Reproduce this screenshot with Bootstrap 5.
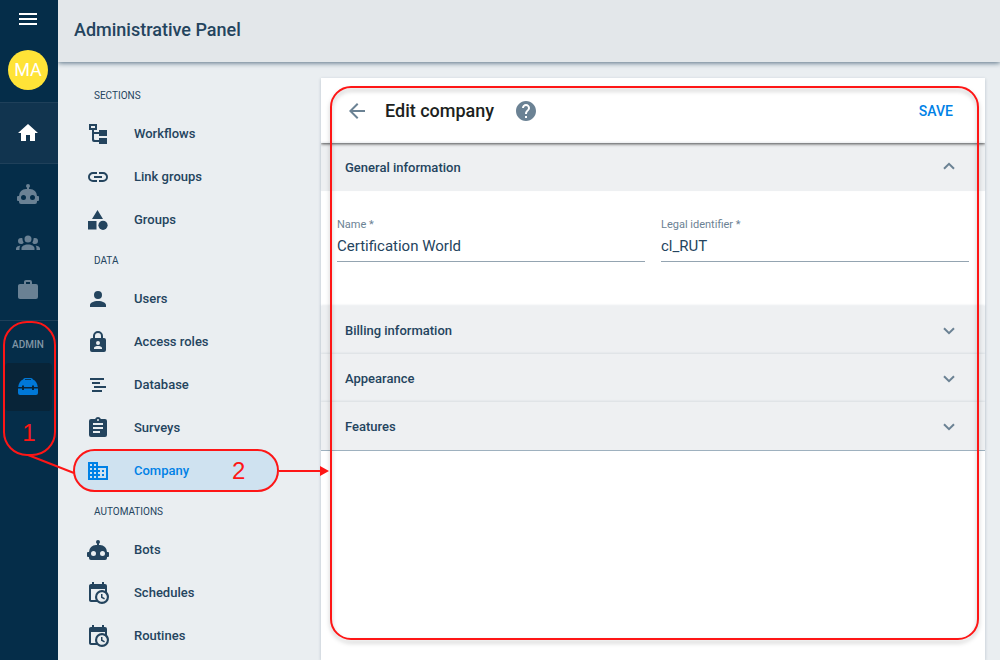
<!DOCTYPE html>
<html lang="en">
<head>
<meta charset="utf-8">
<meta name="viewport" content="width=device-width, initial-scale=1">
<title>Administrative Panel</title>
<link href="https://cdn.jsdelivr.net/npm/bootstrap@5.3.0/dist/css/bootstrap.min.css" rel="stylesheet">
<style>
  :root { --navy:#052d49; --ink:#24445e; --slate:#6b8294; --blue:#0081e6; --red:#fe1616; }
  body { font-family: Roboto, "Liberation Sans", sans-serif; font-size: 13px; line-height: 20px; color: var(--ink); background: #eaeef1; }
  svg { display: block; fill: currentColor; flex-shrink: 0; }
  a { color: inherit; text-decoration: none; }
  button { font-family: inherit; }

  /* icon rail */
  .rail { width: 58px; padding-right: 2px; background: var(--navy); flex-shrink: 0; }
  .rail-btn { display: flex; align-items: center; justify-content: center; width: 100%; height: 48px; border: 0; background: none; color: #6a8194; }
  .rail-menu { height: 38px; color: #fff; }
  .avatar { width: 40px; height: 40px; margin: 12px auto; background: #ffe337; color: #fff; font-size: 18px; }
  .rail-home { height: 62px; width: 58px; margin-bottom: 6px; padding-right: 2px; color: #fff; background: #11344f; border: solid #1f405a; border-width: 1px 0; }
  .rail-admin { width: 58px; margin-top: 6px; border-top: 1px solid #1f405a; height: 136px; }
  .rail-label { height: 42px; padding: 14px 2px 0 0; font-size: 10px; font-weight: 500; color: #8196a6; }
  .rail-active { width: 47px; margin-left: 5px; padding-right: 1px; color: #0078d7; background: #082438; border-radius: 4px; }

  /* numbered highlights */
  .callout-ring { position: absolute; border: 2px solid var(--red); pointer-events: none; }
  .ring-admin { inset: 0 2px 0 3px; border-radius: 24px; }
  .ring-company { inset: 0; border-radius: 22px; }
  .ring-panel { inset: 8px 6px 20px 9px; border-radius: 21px; filter: drop-shadow(0 3px 2px rgba(0,0,0,.25)); z-index: 3; }
  .callout-num { font-family: "Liberation Sans", sans-serif; font-size: 24px; line-height: 44px; color: var(--red); font-weight: 400; }
  .link-line { position: absolute; left: 28px; top: 134px; overflow: visible; z-index: 4; }
  .link-arrow { position: absolute; left: 100%; top: 17px; z-index: 4; }

  .topbar { height: 62px; padding: 0 16px; background: #e3e7ea; box-shadow: 0 1px 5px rgba(36,68,94,.75); z-index: 2; clip-path: inset(0 0 -8px 0); }
  .topbar h1 { font-size: 18px; line-height: 24px; font-weight: 500; padding-bottom: 3px; }

  .side { width: 263px; padding: 14px 42px 0 15px; flex-shrink: 0; }
  .side h2 { height: 36px; margin: 0; padding: 10px 0 0 21px; font-size: 10px; line-height: 20px; font-weight: 400; }
  .side-item { position: relative; display: flex; align-items: center; height: 43px; padding-left: 13px; font-weight: 500; }
  .side-item span:first-of-type { margin-left: 24px; }
  .side-item.active { color: var(--blue); background: #cfe2f0; border-radius: 22px; }
  .side-item .callout-num { margin-left: 43px; }

  .panel { position: relative; margin: 16px 15px 0 0; background: #fff; box-shadow: 0 1px 3px rgba(36,68,94,.25); min-width: 0; }
  .panel-head { position: relative; height: 65px; padding: 0 32px 0 24px; box-shadow: 0 1px 3px rgba(0,0,0,.7); clip-path: inset(0 0 -6px 0); z-index: 1; }
  .panel-head h2 { margin: 0 20px 0 16px; font-size: 18px; line-height: 24px; font-weight: 500; color: #1c1f21; }
  .icon-btn { padding: 0; border: 0; background: none; color: var(--slate); }
  .save { padding: 0; border: 0; background: none; color: var(--blue); font-size: 14px; font-weight: 500; }
  .fold { display: flex; align-items: center; justify-content: space-between; width: 100%; height: 48px; padding: 2px 30px 0 24px; border: 0; background: #eef0f2; color: var(--ink); font-weight: 500; box-shadow: 0 -1px 2px rgba(36,68,94,.1); }
  .fold svg { color: var(--slate); }
  .fold[aria-expanded="true"] svg { margin-bottom: 4px; }
  .folds { border-bottom: 1px solid #9fb2c0; }
  .fields { height: 115px; padding: 26px 16px 0; gap: 16px; }
  .fields label { display: block; height: 16px; font-size: 11px; line-height: 16px; color: var(--slate); }
  .fields input { display: block; width: 100%; height: 29px; padding: 0 0 3px; border: 0; border-bottom: 1px solid #94a4b1; border-radius: 0; background: none; color: var(--ink); font-size: 15px; }
</style>
</head>
<body>
<svg class="d-none" aria-hidden="true">
  <symbol id="robot" viewBox="0 0 24 24"><path d="M12,2A2,2 0 0,1 14,4C14,4.74 13.6,5.39 13,5.73V7H14A7,7 0 0,1 21,14H22A1,1 0 0,1 23,15V18A1,1 0 0,1 22,19H21V20A2,2 0 0,1 19,22H5A2,2 0 0,1 3,20V19H2A1,1 0 0,1 1,18V15A1,1 0 0,1 2,14H3A7,7 0 0,1 10,7H11V5.73C10.4,5.39 10,4.74 10,4A2,2 0 0,1 12,2M7.5,13A2.5,2.5 0 0,0 5,15.5A2.5,2.5 0 0,0 7.5,18A2.5,2.5 0 0,0 10,15.5A2.5,2.5 0 0,0 7.5,13M16.5,13A2.5,2.5 0 0,0 14,15.5A2.5,2.5 0 0,0 16.5,18A2.5,2.5 0 0,0 19,15.5A2.5,2.5 0 0,0 16.5,13Z"/></symbol>
  <symbol id="calclock" viewBox="0 0 24 24"><path d="M15,13H16.5V15.82L18.94,17.23L18.19,18.53L15,16.69V13M19,8H5V19H9.67C9.24,18.09 9,17.07 9,16A7,7 0 0,1 16,9C17.07,9 18.09,9.24 19,9.67V8M5,21C3.89,21 3,20.1 3,19V5C3,3.89 3.89,3 5,3H6V1H8V3H16V1H18V3H19A2,2 0 0,1 21,5V11.1C22.24,12.36 23,14.09 23,16A7,7 0 0,1 16,23C14.09,23 12.36,22.24 11.1,21H5M16,11.15A4.85,4.85 0 0,0 11.15,16C11.15,18.68 13.32,20.85 16,20.85A4.85,4.85 0 0,0 20.85,16C20.85,13.32 18.68,11.15 16,11.15Z"/></symbol>
  <symbol id="down" viewBox="0 0 12 8"><path d="M1 1.2l5 5 5-5" fill="none" stroke="currentColor" stroke-width="2"/></symbol>
</svg>

<div class="d-flex min-vh-100">
  <nav class="rail" aria-label="Main">
    <button class="rail-btn rail-menu" type="button" aria-label="Menu"><svg width="24" height="24" viewBox="0 0 24 24"><path d="M3,6H21V8H3V6M3,11H21V13H3V11M3,16H21V18H3V16Z"/></svg></button>
    <div class="avatar rounded-circle d-flex align-items-center justify-content-center">MA</div>
    <a class="rail-btn rail-home" href="#" aria-label="Home"><svg width="24" height="24" viewBox="0 0 24 24"><path d="M10,20V14H14V20H19V12H22L12,3L2,12H5V20H10Z"/></svg></a>
    <a class="rail-btn" href="#" aria-label="Bots"><svg width="24" height="24"><use href="#robot"/></svg></a>
    <a class="rail-btn" href="#" aria-label="People"><svg width="24" height="24" viewBox="0 0 24 24"><path d="M12,5.5A3.5,3.5 0 0,1 15.5,9A3.5,3.5 0 0,1 12,12.5A3.5,3.5 0 0,1 8.5,9A3.5,3.5 0 0,1 12,5.5M5,8C5.56,8 6.08,8.15 6.53,8.42C6.38,9.85 6.8,11.27 7.66,12.38C7.16,13.34 6.16,14 5,14A3,3 0 0,1 2,11A3,3 0 0,1 5,8M19,8A3,3 0 0,1 22,11A3,3 0 0,1 19,14C17.84,14 16.84,13.34 16.34,12.38C17.2,11.27 17.62,9.85 17.47,8.42C17.92,8.15 18.44,8 19,8M5.5,18.25C5.5,16.18 8.41,14.5 12,14.5C15.59,14.5 18.5,16.18 18.5,18.25V20H5.5V18.25M0,20V18.5C0,17.11 1.89,15.94 4.45,15.6C3.86,16.28 3.5,17.22 3.5,18.25V20H0M24,20H20.5V18.25C20.5,17.22 20.14,16.28 19.55,15.6C22.11,15.94 24,17.11 24,18.5V20Z"/></svg></a>
    <a class="rail-btn" href="#" aria-label="Work"><svg width="24" height="24" viewBox="0 0 24 24"><path d="M10,2H14A2,2 0 0,1 16,4V6H20A2,2 0 0,1 22,8V19A2,2 0 0,1 20,21H4C2.89,21 2,20.1 2,19V8C2,6.89 2.89,6 4,6H8V4C8,2.89 8.89,2 10,2M14,6V4H10V6H14Z"/></svg></a>
    <div class="rail-admin position-relative text-center">
      <div class="rail-label">ADMIN</div>
      <a class="rail-btn rail-active" href="#" aria-label="Admin tools"><svg width="24" height="24" viewBox="0 0 24 24"><path fill-rule="evenodd" d="M7 4.500Q7.500 3 9 3H15Q16.500 3 17 4.500C19.500 5.500 21.500 8.500 21.800 12H18V10.500H16V12H8V10.500H6V12H2.200C2.500 8.500 4.500 5.500 7 4.500ZM9 5H15V4.200H9ZM2 13.500H6V15H8V13.500H16V15H18V13.500H22V18Q22 20 20 20H4Q2 20 2 18Z"/></svg></a>
      <div class="callout-num">1</div>
      <div class="callout-ring ring-admin"></div>
      <svg class="link-line" width="46" height="18"><path d="M0 0L46 18" stroke="#fe1616" stroke-width="2"/></svg>
    </div>
  </nav>

  <div class="flex-grow-1 d-flex flex-column" style="min-width:0">
    <header class="topbar d-flex align-items-center"><h1 class="m-0">Administrative Panel</h1></header>
    <div class="d-flex flex-grow-1">
      <nav class="side" aria-label="Sections">
        <h2>SECTIONS</h2>
        <a class="side-item" href="#"><svg width="24" height="24" viewBox="0 0 24 24"><path fill-rule="evenodd" d="M3 2H11V8H8V10H13V8H21V14H13V12H8V17Q8 18 9 18H13V16H21V22H13V20H8Q6 20 6 18V8H3ZM5 4V6H9V4Z"/></svg><span>Workflows</span></a>
        <a class="side-item" href="#"><svg width="24" height="24" viewBox="0 0 24 24"><path d="M3.900,12C3.900,10.290 5.290,8.900 7,8.900H11V7H7A5,5 0 0,0 2,12A5,5 0 0,0 7,17H11V15.100H7C5.290,15.100 3.900,13.710 3.900,12M8,13H16V11H8V13M17,7H13V8.900H17C18.710,8.900 20.100,10.290 20.100,12C20.100,13.710 18.710,15.100 17,15.100H13V17H17A5,5 0 0,0 22,12A5,5 0 0,0 17,7Z"/></svg><span>Link groups</span></a>
        <a class="side-item" href="#"><svg width="24" height="24" viewBox="0 0 24 24"><path d="M11.500 2L17 11H6ZM2 13H10.500V21.500H2Z"/><circle cx="17" cy="17.300" r="4.600"/></svg><span>Groups</span></a>
        <h2>DATA</h2>
        <a class="side-item" href="#"><svg width="24" height="24" viewBox="0 0 24 24"><path d="M12,4A4,4 0 0,1 16,8A4,4 0 0,1 12,12A4,4 0 0,1 8,8A4,4 0 0,1 12,4M12,14C16.420,14 20,15.790 20,18V20H4V18C4,15.790 7.580,14 12,14Z"/></svg><span>Users</span></a>
        <a class="side-item" href="#"><svg width="24" height="24" viewBox="0 0 24 24"><path fill-rule="evenodd" d="M6 8H7V6A5 5 0 0 1 17 6V8H18A2 2 0 0 1 20 10V20A2 2 0 0 1 18 22H6A2 2 0 0 1 4 20V10A2 2 0 0 1 6 8ZM9 8H15V6A3 3 0 0 0 9 6ZM12 11A2 2 0 1 0 12 15A2 2 0 1 0 12 11ZM8 19H16V18C16 16.600 13.500 16 12 16S8 16.600 8 18Z"/></svg><span>Access roles</span></a>
        <a class="side-item" href="#"><svg width="24" height="24" viewBox="0 0 24 24"><path d="M4 5H18V7H4ZM6 9H14V11H6ZM8 13H20V15H8ZM6 17H16V19H6Z"/></svg><span>Database</span></a>
        <a class="side-item" href="#"><svg width="24" height="24" viewBox="0 0 24 24"><path d="M17,9H7V7H17M17,13H7V11H17M14,17H7V15H14M12,3A1,1 0 0,1 13,4A1,1 0 0,1 12,5A1,1 0 0,1 11,4A1,1 0 0,1 12,3M19,3H14.820C14.400,1.840 13.300,1 12,1C10.700,1 9.600,1.840 9.180,3H5A2,2 0 0,0 3,5V19A2,2 0 0,0 5,21H19A2,2 0 0,0 21,19V5A2,2 0 0,0 19,3Z"/></svg><span>Surveys</span></a>
        <a class="side-item active" href="#"><svg width="24" height="24" viewBox="0 0 24 24"><path d="M18,15H16V17H18M18,11H16V13H18M20,19H12V17H14V15H12V13H14V11H12V9H20M10,7H8V5H10M10,11H8V9H10M10,15H8V13H10M10,19H8V17H10M6,7H4V5H6M6,11H4V9H6M6,15H4V13H6M6,19H4V17H6M12,7V3H2V21H22V7H12Z"/></svg><span>Company</span><span class="callout-num">2</span><span class="callout-ring ring-company"></span><svg class="link-arrow" width="50" height="10" viewBox="0 0 50 10"><path fill="#fe1616" d="M0 4H41V0L50 5L41 10V6H0Z"/></svg></a>
        <h2>AUTOMATIONS</h2>
        <a class="side-item" href="#"><svg width="24" height="24"><use href="#robot"/></svg><span>Bots</span></a>
        <a class="side-item" href="#"><svg width="24" height="24"><use href="#calclock"/></svg><span>Schedules</span></a>
        <a class="side-item" href="#"><svg width="24" height="24"><use href="#calclock"/></svg><span>Routines</span></a>
      </nav>

      <main class="panel flex-grow-1">
        <div class="panel-head d-flex align-items-center">
          <button class="icon-btn" type="button" aria-label="Back"><svg width="24" height="24" viewBox="0 0 24 24"><path d="M20 11H7.830l5.590-5.590L12 4l-8 8 8 8 1.410-1.410L7.830 13H20v-2z"/></svg></button>
          <h2>Edit company</h2>
          <button class="icon-btn" type="button" aria-label="Help"><svg width="24" height="24" viewBox="0 0 24 24"><path d="M12 2C6.480 2 2 6.480 2 12s4.480 10 10 10 10-4.480 10-10S17.520 2 12 2zm1 17h-2v-2h2v2zm2.070-7.750l-.9.920C13.450 12.900 13 13.500 13 15h-2v-.5c0-1.100.45-2.100 1.170-2.830l1.240-1.260c.37-.36.59-.86.59-1.410 0-1.100-.9-2-2-2s-2 .9-2 2H8c0-2.210 1.790-4 4-4s4 1.790 4 4c0 .88-.36 1.680-.93 2.250z"/></svg></button>
          <button class="save ms-auto" type="button">SAVE</button>
        </div>
        <div class="folds">
          <button class="fold" type="button" data-bs-toggle="collapse" data-bs-target="#general" aria-expanded="true">General information<svg width="12" height="8" viewBox="0 0 12 8"><path d="M1 6.800l5-5 5 5" fill="none" stroke="currentColor" stroke-width="2"/></svg></button>
          <div class="collapse show" id="general">
            <div class="fields d-flex">
              <div class="flex-fill"><label for="name">Name *</label><input id="name" type="text" value="Certification World"></div>
              <div class="flex-fill"><label for="legal">Legal identifier *</label><input id="legal" type="text" value="cl_RUT"></div>
            </div>
          </div>
          <button class="fold" type="button">Billing information<svg width="12" height="8"><use href="#down"/></svg></button>
          <button class="fold" type="button">Appearance<svg width="12" height="8"><use href="#down"/></svg></button>
          <button class="fold" type="button">Features<svg width="12" height="8"><use href="#down"/></svg></button>
        </div>
        <div class="callout-ring ring-panel"></div>
      </main>
    </div>
  </div>
</div>
<script src="https://cdn.jsdelivr.net/npm/bootstrap@5.3.0/dist/js/bootstrap.bundle.min.js"></script>
</body>
</html>
